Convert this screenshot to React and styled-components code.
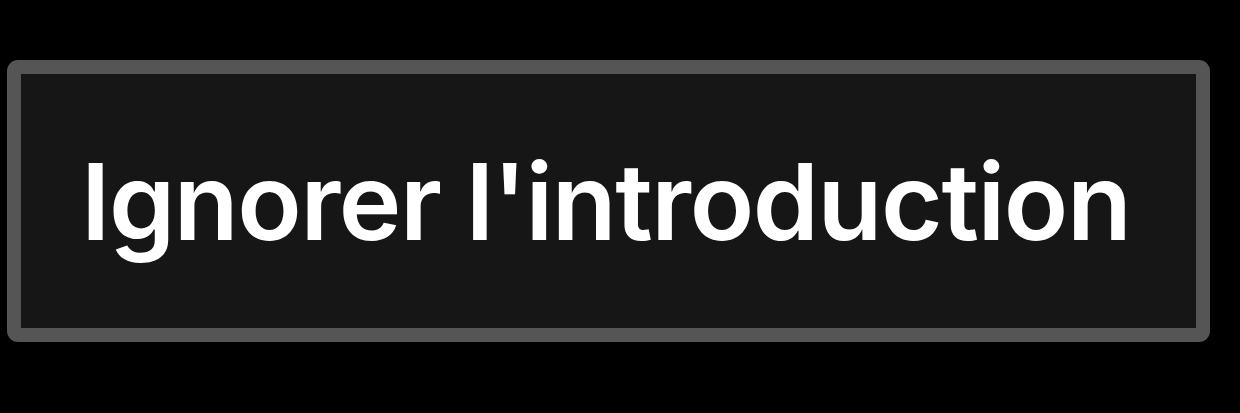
import React from "react";
import styled, { createGlobalStyle } from "styled-components";

const Global = createGlobalStyle`
  html, body { margin: 0; padding: 0; background: #000; }
  body { width: 1240px; height: 413px; overflow: hidden; }
`;

const Page = styled.div`
  width: 1240px;
  height: 413px;
  box-sizing: border-box;
  padding: 60px 30px 0 7px;
  background: #000;
`;

const SkipButton = styled.button`
  box-sizing: border-box;
  width: 1203px;
  height: 282px;
  display: flex;
  align-items: center;
  justify-content: flex-start;
  padding: 0 0 0 ${p => p.$indent}px;
  background: #161616;
  border: 14px solid #555555;
  border-radius: 11px;
  color: #ffffff;
  font-family: Inter, "Noto Sans", sans-serif;
  font-weight: 600;
  font-size: 106px;
  letter-spacing: -1.4px;
  cursor: pointer;
`;

const Label = styled.span`
  display: block;
  line-height: 1;
  transform: translateY(1px);
`;

export default function App() {
  return (
    <>
      <Global />
      <Page>
        <SkipButton $indent={60}>
          <Label>Ignorer l'introduction</Label>
        </SkipButton>
      </Page>
    </>
  );
}
